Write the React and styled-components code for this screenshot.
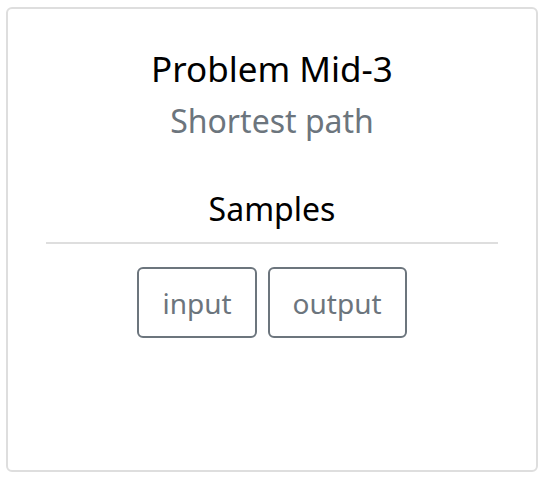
import React from "react";
import styled, { createGlobalStyle } from "styled-components";

const GlobalStyle = createGlobalStyle`
  html, body {
    margin: 0;
    padding: 0;
    background: #fff;
  }
  body {
    font-family: "Noto Sans", "Open Sans", sans-serif;
  }
`;

const Page = styled.div`
  padding: 7px 7px 0 6px;
`;

const Card = styled.div`
  height: 465px;
  box-sizing: border-box;
  border: 2px solid #dedede;
  border-radius: 6px;
  padding: 36px 38px 0;
  display: flex;
  flex-direction: column;
  align-items: center;
`;

const Title = styled.h2`
  margin: 0;
  font-size: 35px;
  font-weight: 400;
  line-height: 48px;
  color: #000;
`;

const Subtitle = styled.div`
  margin-top: 4px;
  font-size: 32px;
  line-height: 48px;
  color: #6c757d;
`;

const SectionTitle = styled.h3`
  margin: 40px 0 0;
  font-size: 32px;
  font-weight: 400;
  line-height: 48px;
  color: #000;
`;

const Divider = styled.hr`
  align-self: stretch;
  margin: 9px 0 23px;
  border: none;
  border-top: 2px solid #dedede;
`;

const ButtonRow = styled.div`
  display: flex;
  gap: 11px;
`;

const OutlineButton = styled.button`
  height: 71px;
  padding: 0 23px;
  background: #fff;
  border: 2px solid #6c757d;
  border-radius: 6px;
  color: #6c757d;
  font-family: inherit;
  font-size: 28px;
  cursor: pointer;
`;

export default function App() {
  return (
    <>
      <GlobalStyle />
      <Page>
        <Card>
          <Title>Problem Mid-3</Title>
          <Subtitle>Shortest path</Subtitle>
          <SectionTitle>Samples</SectionTitle>
          <Divider />
          <ButtonRow>
            <OutlineButton>input</OutlineButton>
            <OutlineButton>output</OutlineButton>
          </ButtonRow>
        </Card>
      </Page>
    </>
  );
}
